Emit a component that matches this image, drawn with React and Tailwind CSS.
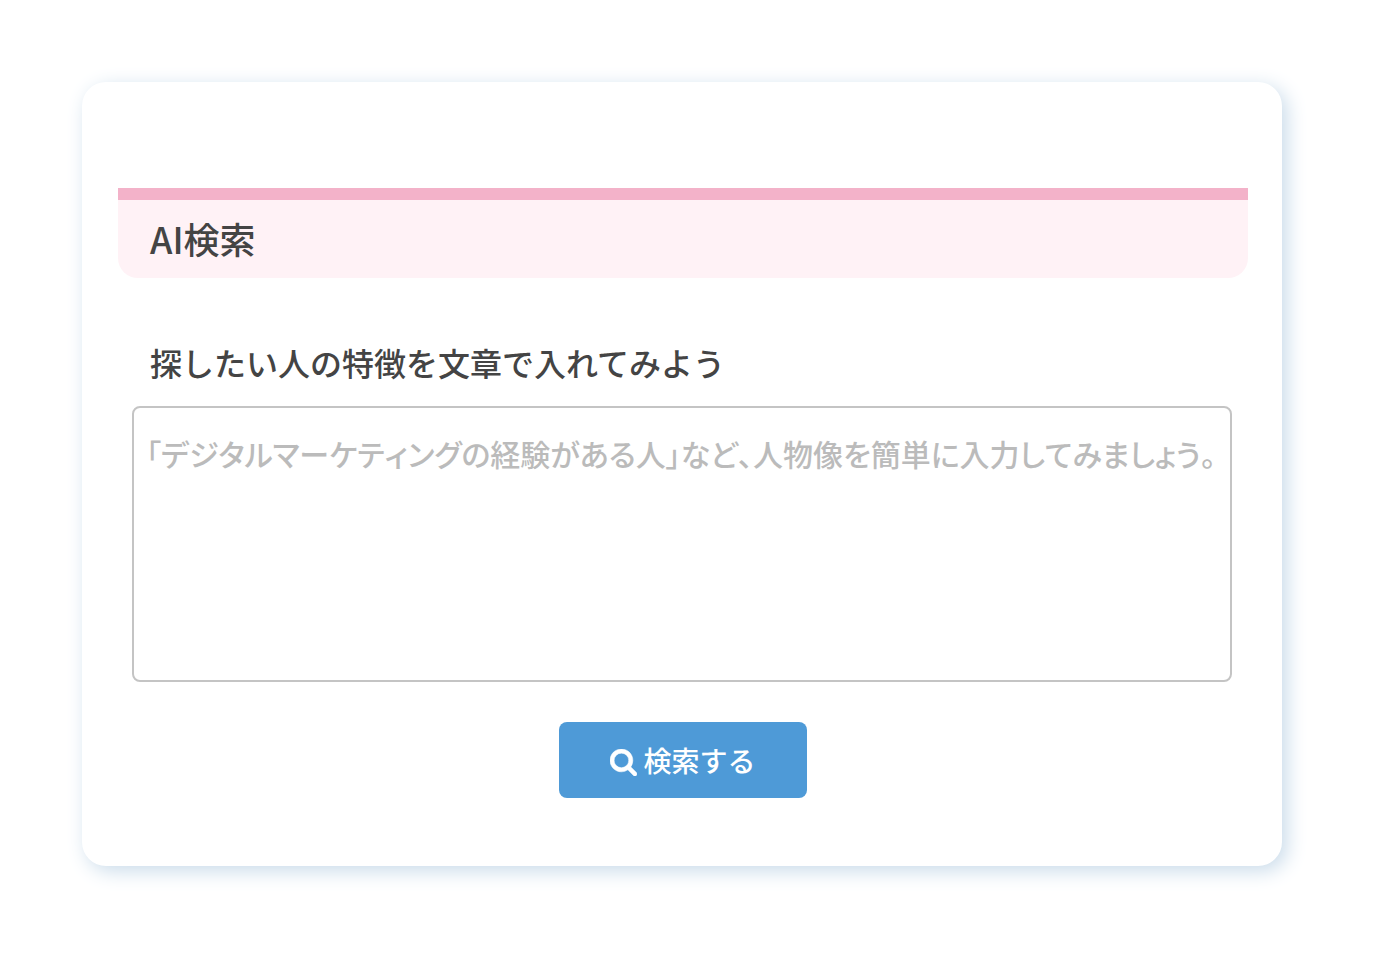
function SearchIcon() {
  return (
    <svg className="mt-1 h-[27px] w-[27px]" viewBox="0 128 1664 1664" fill="currentColor" stroke="currentColor" strokeWidth="30" aria-hidden="true">
      <path d="M1152 832q0-185-131.5-316.5t-316.5-131.5-316.5 131.5-131.5 316.5 131.5 316.5 316.5 131.5 316.5-131.5 131.5-316.5zm512 832q0 52-38 90t-90 38q-54 0-90-38l-343-342q-179 124-399 124-143 0-273.5-55.5t-225-150-150-225-55.5-273.5 55.5-273.5 150-225 225-150 273.5-55.5 273.5 55.5 225 150 150 225 55.5 273.5q0 220-124 399l343 343q37 37 37 90z" />
    </svg>
  );
}

function SectionHeader({ title }) {
  return (
    <header className="rounded-b-[20px] border-t-12 border-[#f3b2c9] bg-[#fff2f6] px-8 pt-[15px] pb-[17px]">
      <h1 className="text-4xl leading-[46px] font-medium">{title}</h1>
    </header>
  );
}

function SearchForm() {
  return (
    <form className="flex flex-col pt-16" onSubmit={(e) => e.preventDefault()}>
      <div className="flex flex-col pr-4 pl-[14px]">
        <label htmlFor="query" className="px-[18px] text-[32px] leading-[40px] font-medium">
          探したい人の特徴を文章で入れてみよう
        </label>
        <textarea
          id="query"
          className="mt-6 h-[276px] w-full resize-none overflow-hidden rounded-lg border-2 border-[#c4c4c4] bg-white px-3 py-6 text-[30px] leading-[42px] font-medium [font-feature-settings:'palt'] [font-kerning:none] placeholder:text-[#bbbbbb] placeholder:opacity-100"
          placeholder="「デジタルマーケティングの経験がある人」など、人物像を簡単に入力してみましょう。"
        />
      </div>
      <button
        type="submit"
        className="mt-10 flex h-[76px] w-[248px] items-center justify-center gap-[6px] self-center rounded-lg bg-[#4e9ad7] text-[28px] leading-[40px] font-medium text-white"
      >
        <SearchIcon />
        検索する
      </button>
    </form>
  );
}

export default function App() {
  return (
    <main className="min-h-screen bg-white py-[82px] pr-[94px] pl-[82px] font-['Noto_Sans_CJK_JP',sans-serif] text-[#444444]" lang="ja">
      <section className="rounded-3xl bg-white pt-[106px] pr-[34px] pb-[68px] pl-9 shadow-[5px_5px_20px_#c9dbea]">
        <SectionHeader title="AI検索" />
        <SearchForm />
      </section>
    </main>
  );
}
